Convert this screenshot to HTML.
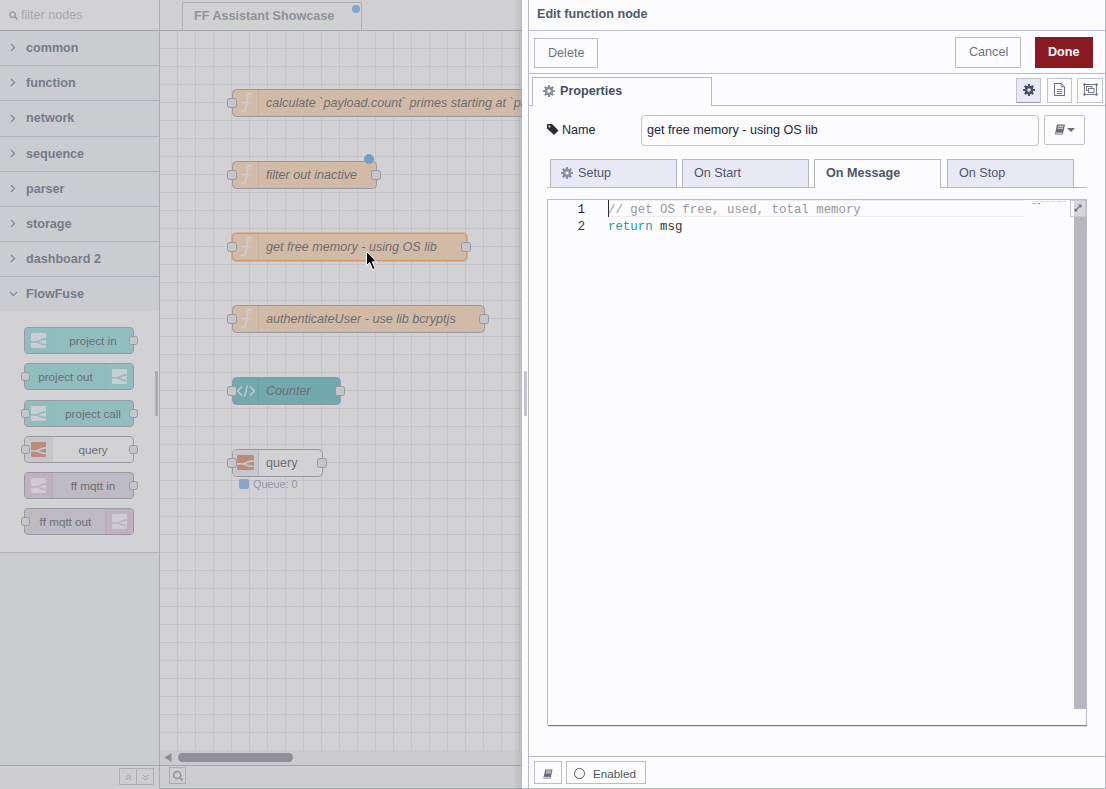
<!DOCTYPE html><html><head><meta charset="utf-8"><style>*{box-sizing:border-box;margin:0;padding:0}
html,body{width:1106px;height:789px;overflow:hidden;background:#fcfcfe;font-family:"Liberation Sans",sans-serif;position:relative}
.a{position:absolute}
svg{display:block}
/* palette */
#palette{left:0;top:0;width:160px;height:789px;border-bottom:1px solid #a4a4b0;background:#f1f2f6;border-right:1px solid #b0aebb}
#psearch{left:0;top:0;width:159px;height:31px;background:#ffffff;border-bottom:1px solid #a4a4b0}
#psearch .ph{left:21px;top:8px;font-size:12.6px;line-height:14px;color:#a3a8b3;white-space:nowrap}
.cat{left:0;width:159px;border-bottom:1px solid #bdbfc9;background:#f1f2f6}
.cat .lbl{left:26px;top:10px;font-size:12.6px;line-height:14px;font-weight:bold;color:#43506a;white-space:nowrap}
#ffcont{left:0;top:311px;width:159px;height:242px;background:#ffffff;border-bottom:1px solid #bdbcc6}
.pn{position:absolute;left:24px;width:110px;height:27px;border:1px solid #8c8c99;border-radius:4px}
.pn .ic{position:absolute;top:0;height:25px}
.pn .lb{position:absolute;top:6px;font-size:11.7px;line-height:14px;color:#2e3140;white-space:nowrap}
.port{position:absolute;width:10px;height:10px;background:#e4e4ea;border:1px solid #8c8c99;border-radius:2.5px}
#pfoot{left:0;top:765px;width:159px;height:24px;border-top:1px solid #a4a4b0;background:#f6f6f9}
.fb{border:1px solid #b4b4be;background:transparent}
/* workspace */
#ws{left:160px;top:0;width:362px;height:789px;background:#fff;overflow:hidden;border-bottom:1px solid #a4a4b0}
#wtabs{left:0;top:0;width:362px;height:31px;background:#fdfdff;border-bottom:1px solid #a8a8b4}
#wtab{left:22px;top:2px;width:180px;height:28px;border:1px solid #b4b4c0;border-bottom:none;background:#fdfdff}
#wtab span{position:absolute;left:11px;top:6px;font-size:12.6px;line-height:14px;font-weight:bold;color:#76808d;white-space:nowrap}
#grid{left:0;top:31px;width:362px;height:719px;background-color:#ffffff;
 background-image:linear-gradient(to right,#e2e2f0 1px,transparent 1px),linear-gradient(to bottom,#e2e2f0 1px,transparent 1px);
 background-size:18px 18px;background-position:17px 17px}
#hscroll{left:0;top:750px;width:362px;height:15px;background:#f1f1f5}
#wfoot{left:0;top:765px;width:362px;height:24px;border-top:1px solid #a4a4b0;background:#f6f6f9}
.node{position:absolute;height:28px;border:1px solid #8c8c99;border-radius:4.5px}
.node.sel{border:1px solid #ff8a2a;box-shadow:0 0 0 1px rgba(255,138,42,0.55)}
.node .ic{position:absolute;left:0;top:0;width:26px;height:26px;border-right:1px solid rgba(0,0,0,0.12)}

.node .lb{position:absolute;left:33px;top:6px;font-size:12.6px;line-height:14px;color:#333;white-space:nowrap;font-style:italic}

#shade{left:0;top:0;width:522px;height:789px;background:rgba(166,166,170,0.5)}
#tshadow{left:513px;top:0;width:9px;height:789px;background:linear-gradient(to right,rgba(80,80,100,0),rgba(80,80,100,0.1) 35%,rgba(80,80,100,0.16) 70%,rgba(80,80,100,0.26))}
/* tray */
#tray{left:522px;top:0;width:584px;height:789px;background:#fcfcfe;border-right:1px solid #b5b5c3;border-bottom:1px solid #b5b5c3}
.tb{position:absolute;border:1px solid #bdbdc9;background:#fcfcfe;font-size:12.6px;line-height:14px;color:#555d6b;white-space:nowrap}
.tb span{position:absolute}
.stab{position:absolute;top:159px;height:28px;border:1px solid #b5b5c3;border-bottom:none;background:#e9e9f6}
.stab span{position:absolute;top:6px;font-size:12.6px;line-height:14px;color:#4e5668;white-space:nowrap}
.cm{font-family:"Liberation Mono",monospace;font-size:12.6px;line-height:17px;white-space:pre;position:absolute}
</style></head><body>
<div id="palette" class="a">
<div id="psearch" class="a"><svg class="a" style="left:9px;top:11px" width="9" height="9" viewBox="0 0 9 9"><circle cx="3.7" cy="3.7" r="2.7" fill="none" stroke="#8e95a3" stroke-width="1.5"/><path d="M5.6 5.6L8.4 8.4" stroke="#8e95a3" stroke-width="1.8"/></svg><span class="a ph">filter nodes</span></div>
<div class="a cat" style="top:31px;height:35px"><svg class="a" width="6" height="9" viewBox="0 0 6 9" style="left:10px;top:12px"><path d="M1 1L4.6 4.5L1 8" fill="none" stroke="#5b6577" stroke-width="1.1"/></svg><span class="a lbl">common</span></div>
<div class="a cat" style="top:66px;height:35px"><svg class="a" width="6" height="9" viewBox="0 0 6 9" style="left:10px;top:12px"><path d="M1 1L4.6 4.5L1 8" fill="none" stroke="#5b6577" stroke-width="1.1"/></svg><span class="a lbl">function</span></div>
<div class="a cat" style="top:101px;height:36px"><svg class="a" width="6" height="9" viewBox="0 0 6 9" style="left:10px;top:13px"><path d="M1 1L4.6 4.5L1 8" fill="none" stroke="#5b6577" stroke-width="1.1"/></svg><span class="a lbl">network</span></div>
<div class="a cat" style="top:137px;height:35px"><svg class="a" width="6" height="9" viewBox="0 0 6 9" style="left:10px;top:12px"><path d="M1 1L4.6 4.5L1 8" fill="none" stroke="#5b6577" stroke-width="1.1"/></svg><span class="a lbl">sequence</span></div>
<div class="a cat" style="top:172px;height:35px"><svg class="a" width="6" height="9" viewBox="0 0 6 9" style="left:10px;top:12px"><path d="M1 1L4.6 4.5L1 8" fill="none" stroke="#5b6577" stroke-width="1.1"/></svg><span class="a lbl">parser</span></div>
<div class="a cat" style="top:207px;height:35px"><svg class="a" width="6" height="9" viewBox="0 0 6 9" style="left:10px;top:12px"><path d="M1 1L4.6 4.5L1 8" fill="none" stroke="#5b6577" stroke-width="1.1"/></svg><span class="a lbl">storage</span></div>
<div class="a cat" style="top:242px;height:35px"><svg class="a" width="6" height="9" viewBox="0 0 6 9" style="left:10px;top:12px"><path d="M1 1L4.6 4.5L1 8" fill="none" stroke="#5b6577" stroke-width="1.1"/></svg><span class="a lbl">dashboard 2</span></div>
<div class="a cat" style="top:277px;height:34px;border-bottom:none"><svg class="a" width="9" height="6" viewBox="0 0 9 6" style="left:9px;top:14px"><path d="M1 1L4.5 4.6L8 1" fill="none" stroke="#5b6577" stroke-width="1.1"/></svg><span class="a lbl" style="top:10px">FlowFuse</span></div>
<div id="ffcont" class="a">
<div class="pn" style="top:16px;background:#7fd4d4">
<div class="ic" style="left:0;width:28px;background:#7fd4d4;border-right:1px solid rgba(0,0,0,0.06);border-radius:3px 0 0 3px"><svg class="a" style="left:6px;top:5px" width="15" height="15" viewBox="0 0 15 15"><rect x="0" y="0" width="15" height="15" rx="1.2" fill="#f4f4f8"/><path d="M0 8.9H5.2C7.5 8.9 8.5 6 15 5.9" fill="none" stroke="#7fd4d4" stroke-width="1.7"/><path d="M5.2 8.9C7.5 8.9 8.5 11.5 15 11.5" fill="none" stroke="#7fd4d4" stroke-width="1.7"/></svg></div>
<span class="lb" style="left:28px;width:80px;text-align:center">project in</span>
</div>
<div class="port" style="left:129px;top:25px;width:9px;height:9px"></div>
<div class="pn" style="top:52px;background:#7fd4d4">
<div class="ic" style="left:80px;width:28px;background:#7fd4d4;border-left:1px solid rgba(0,0,0,0.06);border-radius:0 3px 3px 0"><svg class="a" style="left:6px;top:5px" width="15" height="15" viewBox="0 0 15 15"><rect x="0" y="0" width="15" height="15" rx="1.2" fill="#f4f4f8"/><path d="M0 8.9H5.2C7.5 8.9 8.5 6 15 5.9" fill="none" stroke="#7fd4d4" stroke-width="1.7"/><path d="M5.2 8.9C7.5 8.9 8.5 11.5 15 11.5" fill="none" stroke="#7fd4d4" stroke-width="1.7"/></svg></div>
<span class="lb" style="left:0;width:81px;text-align:center">project out</span>
</div>
<div class="port" style="left:21px;top:61px;width:9px;height:9px"></div>
<div class="pn" style="top:89px;background:#7fd4d4">
<div class="ic" style="left:0;width:28px;background:#7fd4d4;border-right:1px solid rgba(0,0,0,0.06);border-radius:3px 0 0 3px"><svg class="a" style="left:6px;top:5px" width="15" height="15" viewBox="0 0 15 15"><rect x="0" y="0" width="15" height="15" rx="1.2" fill="#f4f4f8"/><path d="M0 8.9H5.2C7.5 8.9 8.5 6 15 5.9" fill="none" stroke="#7fd4d4" stroke-width="1.7"/><path d="M5.2 8.9C7.5 8.9 8.5 11.5 15 11.5" fill="none" stroke="#7fd4d4" stroke-width="1.7"/></svg></div>
<span class="lb" style="left:28px;width:80px;text-align:center">project call</span>
</div>
<div class="port" style="left:21px;top:98px;width:9px;height:9px"></div>
<div class="port" style="left:129px;top:98px;width:9px;height:9px"></div>
<div class="pn" style="top:125px;background:#ffffff">
<div class="ic" style="left:0;width:28px;background:#e6e6ef;border-radius:3px 0 0 3px;border-right:1px solid rgba(0,0,0,0.05)"><svg class="a" style="left:6px;top:5px" width="15" height="15" viewBox="0 0 15 15"><rect x="0" y="0" width="15" height="15" rx="1.2" fill="#d4704c"/><path d="M0 8.9H5.2C7.5 8.9 8.5 6 15 5.9" fill="none" stroke="#e6e6ef" stroke-width="1.7"/><path d="M5.2 8.9C7.5 8.9 8.5 11.5 15 11.5" fill="none" stroke="#e6e6ef" stroke-width="1.7"/></svg></div>
<span class="lb" style="left:28px;width:80px;text-align:center">query</span>
</div>
<div class="port" style="left:21px;top:134px;width:9px;height:9px"></div>
<div class="port" style="left:129px;top:134px;width:9px;height:9px"></div>
<div class="pn" style="top:161px;background:#d4cedb">
<div class="ic" style="left:0;width:28px;background:#dbbdd6;border-right:1px solid rgba(0,0,0,0.06);border-radius:3px 0 0 3px"><svg class="a" style="left:6px;top:5px" width="15" height="15" viewBox="0 0 15 15"><rect x="0" y="0" width="15" height="15" rx="1.2" fill="#f4f4f8"/><path d="M0 8.9H5.2C7.5 8.9 8.5 6 15 5.9" fill="none" stroke="#dbbdd6" stroke-width="1.7"/><path d="M5.2 8.9C7.5 8.9 8.5 11.5 15 11.5" fill="none" stroke="#dbbdd6" stroke-width="1.7"/></svg></div>
<span class="lb" style="left:28px;width:80px;text-align:center">ff mqtt in</span>
</div>
<div class="port" style="left:129px;top:170px;width:9px;height:9px"></div>
<div class="pn" style="top:197px;background:#d4cedb">
<div class="ic" style="left:80px;width:28px;background:#dbbdd6;border-left:1px solid rgba(0,0,0,0.06);border-radius:0 3px 3px 0"><svg class="a" style="left:6px;top:5px" width="15" height="15" viewBox="0 0 15 15"><rect x="0" y="0" width="15" height="15" rx="1.2" fill="#f4f4f8"/><path d="M0 8.9H5.2C7.5 8.9 8.5 6 15 5.9" fill="none" stroke="#dbbdd6" stroke-width="1.7"/><path d="M5.2 8.9C7.5 8.9 8.5 11.5 15 11.5" fill="none" stroke="#dbbdd6" stroke-width="1.7"/></svg></div>
<span class="lb" style="left:0;width:81px;text-align:center">ff mqtt out</span>
</div>
<div class="port" style="left:21px;top:206px;width:9px;height:9px"></div>
</div>
<div class="a" style="left:155px;top:371px;width:3px;height:45px;background:#b0b0ba;border-radius:1px"></div>
<div id="pfoot" class="a"><div class="a fb" style="left:119px;top:2px;width:18px;height:17px"><svg class="a" style="left:5px;top:5px" width="7" height="7" viewBox="0 0 7 7"><path d="M0.8 3.5L3.5 0.8L6.2 3.5M0.8 6.2L3.5 3.5L6.2 6.2" fill="none" stroke="#8a92a6" stroke-width="1"/></svg></div><div class="a fb" style="left:136px;top:2px;width:18px;height:17px"><svg class="a" style="left:5px;top:5px" width="7" height="7" viewBox="0 0 7 7"><path d="M0.8 0.8L3.5 3.5L6.2 0.8M0.8 3.5L3.5 6.2L6.2 3.5" fill="none" stroke="#8a92a6" stroke-width="1"/></svg></div></div>
</div>
<div id="ws" class="a">
<div id="wtabs" class="a"><div id="wtab" class="a"><span>FF Assistant Showcase</span><div class="a" style="left:169px;top:2px;width:8px;height:8px;border-radius:50%;background:#5aa6ea"></div></div></div>
<div id="grid" class="a"></div>
<div class="node" style="left:72px;top:89px;width:420px;background:#fdd0a2">
<div class="ic"><svg class="a" style="left:7px;top:2px" width="14" height="22" viewBox="0 0 14 22"><path d="M11.9 3.1C11.3 0.9 9 0.5 8.1 2.6C7.3 4.5 6.5 13 5.7 17C5.1 19.8 2.4 20.4 0.9 18.6" fill="none" stroke="#f4f4f8" stroke-width="1.9"/><path d="M0.9 10.6H10.5" stroke="#f4f4f8" stroke-width="1.5"/></svg></div>
<span class="lb">calculate `payload.count` primes starting at `payload.start`</span>
</div>
<div class="port" style="left:67px;top:98px"></div>
<div class="node" style="left:72px;top:161px;width:145px;background:#fdd0a2">
<div class="ic"><svg class="a" style="left:7px;top:2px" width="14" height="22" viewBox="0 0 14 22"><path d="M11.9 3.1C11.3 0.9 9 0.5 8.1 2.6C7.3 4.5 6.5 13 5.7 17C5.1 19.8 2.4 20.4 0.9 18.6" fill="none" stroke="#f4f4f8" stroke-width="1.9"/><path d="M0.9 10.6H10.5" stroke="#f4f4f8" stroke-width="1.5"/></svg></div>
<span class="lb">filter out inactive</span>
</div>
<div class="port" style="left:67px;top:170px"></div>
<div class="port" style="left:211px;top:170px"></div>
<div class="node sel" style="left:72px;top:233px;width:235px;background:#fdd0a2">
<div class="ic"><svg class="a" style="left:7px;top:2px" width="14" height="22" viewBox="0 0 14 22"><path d="M11.9 3.1C11.3 0.9 9 0.5 8.1 2.6C7.3 4.5 6.5 13 5.7 17C5.1 19.8 2.4 20.4 0.9 18.6" fill="none" stroke="#f4f4f8" stroke-width="1.9"/><path d="M0.9 10.6H10.5" stroke="#f4f4f8" stroke-width="1.5"/></svg></div>
<span class="lb">get free memory - using OS lib</span>
</div>
<div class="port" style="left:67px;top:242px"></div>
<div class="port" style="left:301px;top:242px"></div>
<div class="node" style="left:72px;top:305px;width:253px;background:#fdd0a2">
<div class="ic"><svg class="a" style="left:7px;top:2px" width="14" height="22" viewBox="0 0 14 22"><path d="M11.9 3.1C11.3 0.9 9 0.5 8.1 2.6C7.3 4.5 6.5 13 5.7 17C5.1 19.8 2.4 20.4 0.9 18.6" fill="none" stroke="#f4f4f8" stroke-width="1.9"/><path d="M0.9 10.6H10.5" stroke="#f4f4f8" stroke-width="1.5"/></svg></div>
<span class="lb">authenticateUser - use lib bcryptjs</span>
</div>
<div class="port" style="left:67px;top:314px"></div>
<div class="port" style="left:319px;top:314px"></div>
<div class="node" style="left:72px;top:377px;width:109px;background:#3fadb5">
<div class="ic"><svg class="a" style="left:3px;top:6px" width="20" height="14" viewBox="0 0 20 14"><path d="M6 2.5L1.5 7L6 11.5M14 2.5L18.5 7L14 11.5M11.5 1.5L8.5 12.5" fill="none" stroke="#f0f0f4" stroke-width="1.3"/></svg></div>
<span class="lb">Counter</span>
</div>
<div class="port" style="left:67px;top:386px"></div>
<div class="port" style="left:175px;top:386px"></div>
<div class="node" style="left:72px;top:449px;width:91px;background:#ffffff">
<div class="ic" style="background:#e6e6ef;border-radius:3px 0 0 3px"><svg class="a" style="left:4px;top:5px" width="17" height="15" viewBox="0 0 15 15" preserveAspectRatio="none"><rect x="0" y="0" width="15" height="15" rx="1.2" fill="#d4704c"/><path d="M0 8.9H5.2C7.5 8.9 8.5 6 15 5.9" fill="none" stroke="#e6e6ef" stroke-width="1.7"/><path d="M5.2 8.9C7.5 8.9 8.5 11.5 15 11.5" fill="none" stroke="#e6e6ef" stroke-width="1.7"/></svg></div>
<span class="lb" style="font-style:normal">query</span>
</div>
<div class="port" style="left:67px;top:458px"></div>
<div class="port" style="left:157px;top:458px"></div>
<div class="a" style="left:204px;top:154px;width:10px;height:10px;border-radius:50%;background:#3d97de;border:1px solid #5b8fbf"></div>
<div class="a" style="left:79px;top:479px;width:10px;height:10px;border-radius:2px;background:#6d9ee6"></div>
<span class="a" style="left:93px;top:478px;font-size:10.8px;color:#7e8594;white-space:nowrap">Queue: 0</span>
<div id="hscroll" class="a"><svg class="a" style="left:4px;top:3px" width="8" height="9" viewBox="0 0 8 9"><path d="M7.5 0L0.5 4.5L7.5 9Z" fill="#74747f"/></svg><div class="a" style="left:18px;top:3px;width:115px;height:9px;border-radius:5px;background:#787882"></div></div>
<div id="wfoot" class="a"><div class="a fb" style="left:9px;top:1px;width:17px;height:17px"><svg class="a" style="left:2px;top:2px" width="12" height="12" viewBox="0 0 12 12"><circle cx="5.2" cy="5" r="3.5" fill="none" stroke="#7d8598" stroke-width="1.6"/><path d="M7.8 7.6L10.6 10.4" stroke="#7d8598" stroke-width="1.8"/></svg></div></div>
</div>
<div id="tshadow" class="a"></div>
<div id="shade" class="a"></div>
<svg class="a" style="left:366px;top:251px;z-index:5" width="12" height="19" viewBox="0 0 12 19"><path d="M0.5 0.5V14.6L3.7 11.6L6.7 18.6L9.2 17.5L6.2 10.8H10.6Z" fill="#000" stroke="#fff" stroke-width="1"/></svg>
<div id="tray" class="a">
 <div class="a" style="left:6px;top:0;width:1px;height:789px;background:#bcbcc8"></div>
 <div class="a" style="left:2px;top:371px;width:3px;height:45px;background:#c4c4ce;border-radius:1px"></div>
 <div class="a" style="left:7px;top:30px;width:577px;height:1px;background:#bcbcc8"></div>
 <span class="a" style="left:15px;top:7px;font-size:12.6px;line-height:14px;font-weight:bold;color:#505b6d;white-space:nowrap">Edit function node</span>
 <div class="a" style="left:7px;top:73px;width:577px;height:1px;background:#bcbcc8"></div>
 <div class="tb" style="left:12px;top:38px;width:64px;height:30px"><span style="left:13px;top:7px;color:#6b7280">Delete</span></div>
 <div class="tb" style="left:433px;top:37px;width:66px;height:31px"><span style="left:13px;top:7px;color:#6b7280">Cancel</span></div>
 <div class="a" style="left:513px;top:37px;width:58px;height:31px;background:#8a1a21"><span class="a" style="left:13px;top:8px;font-size:12.6px;line-height:14px;font-weight:bold;color:#fff">Done</span></div>
 <!-- properties tab strip -->
 <div class="a" style="left:7px;top:105px;width:577px;height:1px;background:#b9b9c6"></div>
 <div class="a" style="left:10px;top:77px;width:180px;height:29px;background:#fcfcfe;border:1px solid #b9b9c6;border-bottom:none"></div>
 <svg class="a" style="left:21px;top:85px" width="12" height="12" viewBox="0 0 12 12"><g fill="#8a8f9c"><circle cx="6" cy="6" r="4.2"/><rect x="4.9" y="0" width="2.2" height="12" rx="0.5"/><rect x="0" y="4.9" width="12" height="2.2" rx="0.5"/><rect x="4.9" y="0" width="2.2" height="12" rx="0.5" transform="rotate(45 6 6)"/><rect x="4.9" y="0" width="2.2" height="12" rx="0.5" transform="rotate(-45 6 6)"/></g><circle cx="6" cy="6" r="1.8" fill="#fcfcfe"/></svg>
 <span class="a" style="left:38px;top:84px;font-size:12.6px;line-height:14px;font-weight:bold;color:#44506a;white-space:nowrap">Properties</span>
 <div class="a" style="left:494px;top:78px;width:25px;height:25px;background:#e9e9f6;border:1px solid #c4c4d0;border-bottom:1px solid #9a9aa8"></div>
 <svg class="a" style="left:501px;top:84px" width="12" height="12" viewBox="0 0 12 12"><g fill="#4a5068"><circle cx="6" cy="6" r="4.2"/><rect x="4.9" y="0" width="2.2" height="12" rx="0.5"/><rect x="0" y="4.9" width="12" height="2.2" rx="0.5"/><rect x="4.9" y="0" width="2.2" height="12" rx="0.5" transform="rotate(45 6 6)"/><rect x="4.9" y="0" width="2.2" height="12" rx="0.5" transform="rotate(-45 6 6)"/></g><circle cx="6" cy="6" r="1.8" fill="#e9e9f6"/></svg>
 <div class="a" style="left:525px;top:78px;width:25px;height:25px;border:1px solid #c4c4d0"></div>
 <svg class="a" style="left:532px;top:83px" width="11" height="13" viewBox="0 0 11 13"><path d="M0.5 0.5H7.2L10.5 3.8V12.5H0.5Z" fill="none" stroke="#6a6f80" stroke-width="1"/><path d="M7.2 0.5V3.8H10.5" fill="none" stroke="#6a6f80" stroke-width="0.9"/><path d="M2.8 6.5H8.2M2.8 8.5H8.2M2.8 10.5H8.2" stroke="#6a6f80" stroke-width="0.9"/></svg>
 <div class="a" style="left:555px;top:78px;width:26px;height:25px;border:1px solid #c4c4d0"></div>
 <svg class="a" style="left:561px;top:83px" width="15" height="13" viewBox="0 0 15 13"><rect x="1.5" y="1.5" width="12" height="10" fill="none" stroke="#6a6f80" stroke-width="0.9"/><circle cx="1.5" cy="1.5" r="1.2" fill="#6a6f80"/><circle cx="13.5" cy="1.5" r="1.2" fill="#6a6f80"/><circle cx="1.5" cy="11.5" r="1.2" fill="#6a6f80"/><circle cx="13.5" cy="11.5" r="1.2" fill="#6a6f80"/><rect x="3.5" y="3.5" width="5.5" height="4" fill="none" stroke="#6a6f80" stroke-width="0.9"/><rect x="5.5" y="5.5" width="5.5" height="4" fill="#fcfcfe" stroke="#6a6f80" stroke-width="0.9"/></svg>
 <!-- name row -->
 <svg class="a" style="left:25px;top:124px" width="12" height="11" viewBox="0 0 12 11"><path d="M0 0.5C0 0.2 0.2 0 0.5 0H5L11.5 6.5L7 11L0 4.5Z" fill="#2b2e3c"/><circle cx="2.5" cy="2.5" r="1" fill="#fcfcfe"/></svg>
 <span class="a" style="left:40px;top:123px;font-size:12.6px;line-height:14px;color:#1f2538;white-space:nowrap">Name</span>
 <div class="a" style="left:119px;top:115px;width:398px;height:31px;border:1px solid #c2c2cd;border-radius:4px;background:#fcfcfe"></div>
 <span class="a" style="left:125px;top:123px;font-size:12.6px;line-height:14px;color:#1f2538;white-space:nowrap">get free memory - using OS lib</span>
 <div class="a" style="left:522px;top:115px;width:41px;height:30px;border:1px solid #c2c2cd;border-radius:2px"></div>
 <svg class="a" style="left:532px;top:124px" width="12" height="11" viewBox="0 0 12 11"><path d="M3 0.5H11L8.8 10.5H0.8Z" fill="#666a78"/><path d="M1.5 9.2H8.5M4 2.2H9.6M3.6 4.2H9.2" stroke="#fcfcfe" stroke-width="0.9"/></svg>
 <svg class="a" style="left:545px;top:128px" width="8" height="4" viewBox="0 0 8 4"><path d="M0 0H8L4 4Z" fill="#666a78"/></svg>
 <!-- sub tabs -->
 <div class="a" style="left:25px;top:187px;width:540px;height:1px;background:#b9b9c6"></div>
 <div class="stab" style="left:28px;width:127px"><svg class="a" style="left:10px;top:7px" width="12" height="12" viewBox="0 0 12 12"><g fill="#8a8f9c"><circle cx="6" cy="6" r="4.2"/><rect x="4.9" y="0" width="2.2" height="12" rx="0.5"/><rect x="0" y="4.9" width="12" height="2.2" rx="0.5"/><rect x="4.9" y="0" width="2.2" height="12" rx="0.5" transform="rotate(45 6 6)"/><rect x="4.9" y="0" width="2.2" height="12" rx="0.5" transform="rotate(-45 6 6)"/></g><circle cx="6" cy="6" r="1.8" fill="#e9e9f6"/></svg><span style="left:27px">Setup</span></div>
 <div class="stab" style="left:160px;width:127px"><span style="left:11px">On Start</span></div>
 <div class="stab" style="left:292px;width:127px;background:#fcfcfe;height:29px"><span style="left:11px;font-weight:bold;color:#4d586b">On Message</span></div>
 <div class="stab" style="left:425px;width:127px"><span style="left:11px">On Stop</span></div>
 <!-- editor -->
 <div class="a" style="left:25px;top:199px;width:540px;height:526px;border:1px solid #bcbcc8;border-bottom:none;background:#fcfcfe"></div>
 <div class="a" style="left:26px;top:725px;width:539px;height:1px;background:#3d8ce4"></div><div class="a" style="left:26px;top:726px;width:539px;height:1px;background:#dcdce6"></div>
 <div class="a" style="left:86px;top:200px;width:416px;height:17px;border-top:1px solid #ededf2;border-bottom:1px solid #ededf2"></div>
 <div class="a" style="left:86px;top:200px;width:1px;height:17px;background:#2a2a35"></div>
 <span class="cm" style="left:37px;top:202px;width:26px;text-align:right;color:#1c1a6a">1</span>
 <span class="cm" style="left:37px;top:219px;width:26px;text-align:right;color:#3b3b48">2</span>
 <span class="cm" style="left:86px;top:202px;color:#97979e;font-size:12.4px">// get OS free, used, total memory</span>
 <span class="cm" style="left:86px;top:219px;color:#333;font-size:12.4px"><span style="color:#2f9a9a;position:static">return</span> msg</span>
 <div class="a" style="left:552px;top:200px;width:12px;height:509px;background:#b8b7c0"></div>
 <div class="a" style="left:548px;top:200px;width:16px;height:17px;background:rgba(252,252,254,0.45);border:1px solid #c8c8d2"></div>
 <svg class="a" style="left:552px;top:204px" width="8" height="8" viewBox="0 0 8 8"><path d="M1 7L7 1M4.5 1H7V3.5M1 4.5V7H3.5" fill="none" stroke="#6d7282" stroke-width="1.1"/></svg>
 <svg class="a" style="left:510px;top:200px" width="36" height="5" viewBox="0 0 36 5"><path d="M0 1.5H1.5M2.5 1.5H4M5 1.5H6M8 1.5H12M14 1.5H17M19 1.5H23M25 1.5H29M30 1.5H34" stroke="#d3d3dc" stroke-width="1"/><path d="M0 3.5H5" stroke="#9cc6c6" stroke-width="1"/><path d="M6 3.5H8" stroke="#8a8a94" stroke-width="1"/></svg>
 <!-- footer -->
 <div class="a" style="left:7px;top:756px;width:577px;height:1px;background:#b9b9c6"></div>
 <div class="tb" style="left:12px;top:761px;width:28px;height:23px"></div>
 <svg class="a" style="left:20px;top:769px" width="12" height="10" viewBox="0 0 12 11"><path d="M3 0.5H11L8.8 10.5H0.8Z" fill="#666a78"/><path d="M1.5 9.2H8.5M4 2.2H9.6M3.6 4.2H9.2" stroke="#fcfcfe" stroke-width="0.9"/></svg>
 <div class="tb" style="left:44px;top:761px;width:80px;height:23px"><span style="left:26px;top:5px;font-size:11.7px;color:#4e5668">Enabled</span></div>
 <div class="a" style="left:52px;top:768px;width:11px;height:11px;border-radius:50%;border:1.2px solid #4e5668"></div>
</div>

</body></html>
